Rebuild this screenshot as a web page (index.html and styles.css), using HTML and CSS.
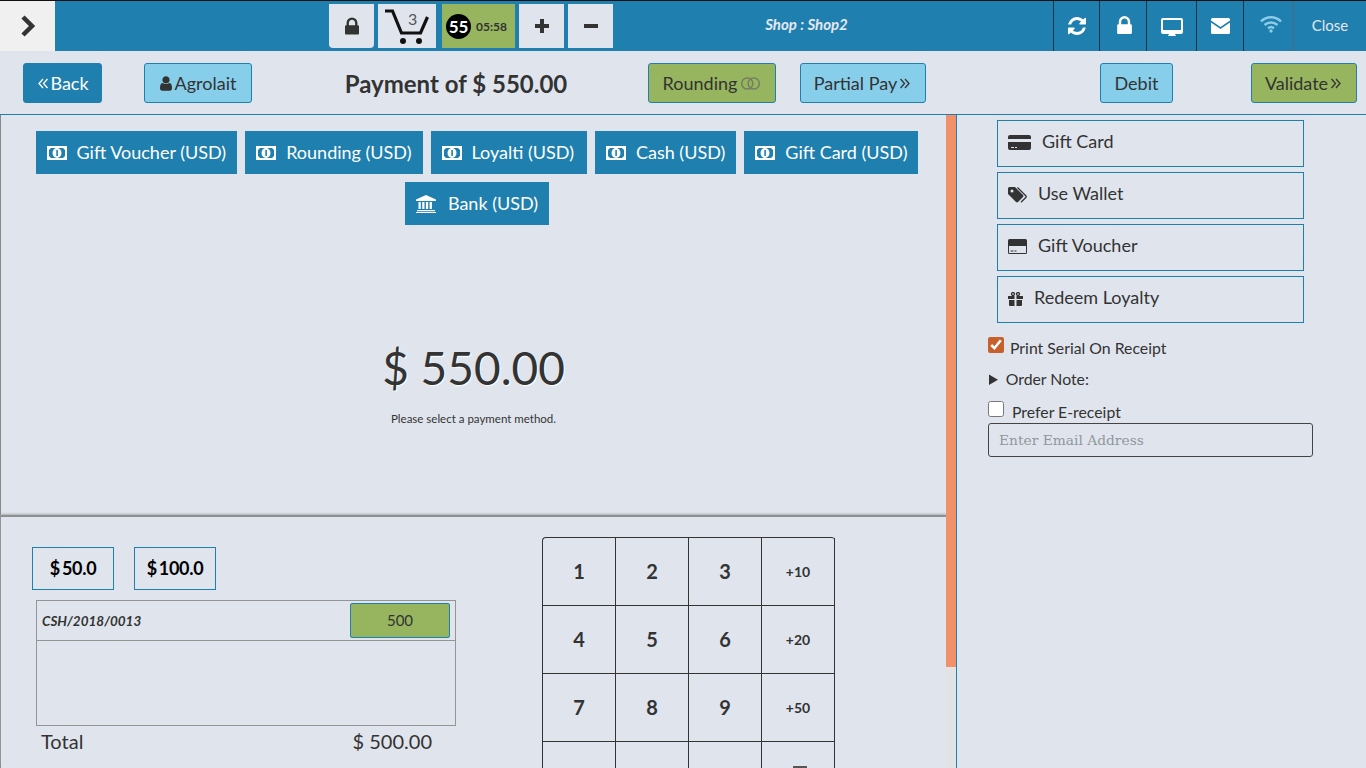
FILE: index.html
```html
<!DOCTYPE html>
<html>

<head>
    <title>Payment</title>
    <link rel="stylesheet" href="styles.css">
</head>

<body>
    <div class="topbar">
        <div class="toggle">
            <svg width="16" height="22" viewBox="0 0 16 22"><polyline points="3,2 12,11 3,20" fill="none" stroke="#333" stroke-width="4.5"/></svg>
        </div>
        <div class="tools">
            <div class="tool tool-lock">
                <svg width="14" height="18" viewBox="0 128 1152 1408"><path fill="#333" d="M320 768h512v-192q0-106-75-181t-181-75-181 75-75 181v192zm832 96v576q0 40-28 68t-68 28h-960q-40 0-68-28t-28-68v-576q0-40 28-68t68-28h32v-192q0-184 132-316t316-132 316 132 132 316v192h32q40 0 68 28t28 68z"/></svg>
            </div>
            <div class="tool tool-cart">
                <svg width="46" height="38" viewBox="0 0 46 38">
                    <path d="M1 4h7.500l9 22h19l7-16" fill="none" stroke="#111" stroke-width="3.200"/>
                    <circle cx="19" cy="34" r="3" fill="#111"/>
                    <circle cx="35" cy="34" r="3" fill="#111"/>
                </svg>
                <span class="cart-count">3</span>
            </div>
            <div class="timer">
                <span class="timer-num">55</span>
                <span class="timer-time">05:58</span>
            </div>
            <div class="tool tool-sign">
                <svg width="16" height="16" viewBox="0 0 16 16"><path fill="#333" d="M6 1h4v5h5v4h-5v5H6v-5H1V6h5z"/></svg>
            </div>
            <div class="tool tool-sign">
                <svg width="16" height="16" viewBox="0 0 16 16"><rect x="1" y="6" width="14" height="4" fill="#333"/></svg>
            </div>
        </div>
        <div class="shop">Shop : Shop2</div>
        <div class="status">
            <div class="status-cell cell-sync">
                <svg width="18" height="18" viewBox="0 0 1536 1536"><path fill="#fff" d="M1511 928q0 5-1 7-64 268-268 434.500t-478 166.500q-146 0-282.500-55t-243.500-157l-129 129q-19 19-45 19t-45-19-19-45v-448q0-26 19-45t45-19h448q26 0 45 19t19 45-19 45l-137 137q71 66 161 102t187 36q134 0 250-65t186-179q11-17 53-117 8-23 30-23h192q13 0 22.500 9.500t9.500 22.500zm25-800v448q0 26-19 45t-45 19h-448q-26 0-45-19t-19-45 19-45l138-138q-148-137-349-137-134 0-250 65t-186 179q-11 17-53 117-8 23-30 23h-199q-13 0-22.500-9.500t-9.500-22.500v-7q65-268 270-434.500t480-166.500q146 0 284 55.500t245 156.500l130-129q19-19 45-19t45 19 19 45z"/></svg>
            </div>
            <div class="status-cell cell-lock">
                <svg width="15" height="18" viewBox="0 128 1152 1408"><path fill="#fff" d="M320 768h512v-192q0-106-75-181t-181-75-181 75-75 181v192zm832 96v576q0 40-28 68t-68 28h-960q-40 0-68-28t-28-68v-576q0-40 28-68t68-28h32v-192q0-184 132-316t316-132 316 132 132 316v192h32q40 0 68 28t28 68z"/></svg>
            </div>
            <div class="status-cell cell-screen">
                <svg width="22" height="20" viewBox="0 0 22 20"><path fill="#fff" fill-rule="evenodd" d="M2 1h18a2 2 0 0 1 2 2v12a2 2 0 0 1-2 2h-6l1 2H7l1-2H2a2 2 0 0 1-2-2V3a2 2 0 0 1 2-2zm0 2v10h18V3z"/></svg>
            </div>
            <div class="status-cell cell-mail">
                <svg width="19" height="16" viewBox="0 0 19 16"><path fill="#fff" d="M1.500 0h16A1.500 1.500 0 0 1 19 1.500v1L9.500 9 0 2.500v-1A1.500 1.500 0 0 1 1.500 0zM0 4.500l9.500 6.500L19 4.500v10a1.500 1.500 0 0 1-1.500 1.500h-16A1.500 1.500 0 0 1 0 14.500z"/></svg>
            </div>
            <div class="status-cell cell-wifi">
                <svg width="22" height="18" viewBox="0 0 22 18">
                    <g fill="none" stroke="#8acde9" stroke-width="2.400">
                        <path d="M1 6.500a14 14 0 0 1 20 0"/>
                        <path d="M4.500 10a9.500 9.500 0 0 1 13 0"/>
                        <path d="M8 13.300a4.500 4.500 0 0 1 6 0"/>
                    </g>
                    <circle cx="11" cy="16" r="1.700" fill="#8acde9"/>
                </svg>
            </div>
            <div class="status-cell cell-close">Close</div>
        </div>
    </div>

    <div class="header">
        <button class="btn btn-dark btn-back">
            <svg class="dbl" width="10" height="11" viewBox="0 0 10 11"><path d="M5 1 1 5.500 5 10M9.500 1l-4 4.500 4 4.500" fill="none" stroke="currentColor" stroke-width="1.300"/></svg>Back
        </button>
        <button class="btn btn-light btn-customer">
            <svg class="usr" width="12" height="15" viewBox="256 128 1280 1536"><path fill="#333" d="M1536 1399q0 109-62.500 187t-150.500 78h-854q-88 0-150.500-78t-62.500-187q0-85 8.500-160.500t31.500-152 58.500-131 94-89 134.500-34.500q131 128 313 128t313-128q76 0 134.500 34.500t94 89 58.500 131 31.500 152 8.500 160.500zm-256-887q0 159-112.500 271.500t-271.500 112.500-271.500-112.500-112.500-271.500 112.500-271.500 271.500-112.500 271.500 112.500 112.500 271.500z"/></svg>Agrolait
        </button>
        <h1 class="title">Payment of $ 550.00</h1>
        <button class="btn btn-green btn-rounding">
            Rounding<svg class="toggle-ico" width="21" height="13" viewBox="0 0 21 14"><g fill="none" stroke="#747f60" stroke-width="1.600"><circle cx="7" cy="7" r="6"/><circle cx="14" cy="7" r="6"/></g></svg>
        </button>
        <button class="btn btn-light btn-partial">
            Partial Pay<svg class="dbl" width="11" height="11" viewBox="0 0 10 11"><path d="M1 1l4 4.500L1 10M5.500 1l4 4.500-4 4.500" fill="none" stroke="currentColor" stroke-width="1.300"/></svg>
        </button>
        <button class="btn btn-light btn-debit">Debit</button>
        <button class="btn btn-green btn-validate">
            Validate<svg class="dbl" width="11" height="11" viewBox="0 0 10 11"><path d="M1 1l4 4.500L1 10M5.500 1l4 4.500-4 4.500" fill="none" stroke="currentColor" stroke-width="1.300"/></svg>
        </button>
    </div>

    <div class="main">
        <div class="pay">
            <div class="pay-top">
                <div class="methods">
                    <div class="method"><svg class="ico-money" width="20" height="14" viewBox="0 0 20 14"><path fill="#fff" fill-rule="evenodd" d="M0 0h20v14H0zM4 2 2 4v6l2 2h12l2-2V4l-2-2z"/><ellipse cx="10" cy="7" rx="4.500" ry="5" fill="#fff"/><rect x="9.300" y="4" width="1.600" height="6" fill="#1f7fae"/></svg>Gift Voucher (USD)</div>
                    <div class="method"><svg class="ico-money" width="20" height="14" viewBox="0 0 20 14"><path fill="#fff" fill-rule="evenodd" d="M0 0h20v14H0zM4 2 2 4v6l2 2h12l2-2V4l-2-2z"/><ellipse cx="10" cy="7" rx="4.500" ry="5" fill="#fff"/><rect x="9.300" y="4" width="1.600" height="6" fill="#1f7fae"/></svg>Rounding (USD)</div>
                    <div class="method method-wide"><svg class="ico-money" width="20" height="14" viewBox="0 0 20 14"><path fill="#fff" fill-rule="evenodd" d="M0 0h20v14H0zM4 2 2 4v6l2 2h12l2-2V4l-2-2z"/><ellipse cx="10" cy="7" rx="4.500" ry="5" fill="#fff"/><rect x="9.300" y="4" width="1.600" height="6" fill="#1f7fae"/></svg>Loyalti (USD)</div>
                    <div class="method"><svg class="ico-money" width="20" height="14" viewBox="0 0 20 14"><path fill="#fff" fill-rule="evenodd" d="M0 0h20v14H0zM4 2 2 4v6l2 2h12l2-2V4l-2-2z"/><ellipse cx="10" cy="7" rx="4.500" ry="5" fill="#fff"/><rect x="9.300" y="4" width="1.600" height="6" fill="#1f7fae"/></svg>Cash (USD)</div>
                    <div class="method"><svg class="ico-money" width="20" height="14" viewBox="0 0 20 14"><path fill="#fff" fill-rule="evenodd" d="M0 0h20v14H0zM4 2 2 4v6l2 2h12l2-2V4l-2-2z"/><ellipse cx="10" cy="7" rx="4.500" ry="5" fill="#fff"/><rect x="9.300" y="4" width="1.600" height="6" fill="#1f7fae"/></svg>Gift Card (USD)</div>
                    <div class="method"><svg class="ico-bank" width="20" height="18" viewBox="0 0 20 18"><path fill="#fff" d="M10 0l10 4.500V6H0V4.500zM1 15h18v1.200H1zM0 17h20v1H0zM2.500 7h2.300v7H2.500zM6.200 7h2.300v7H6.200zM9.900 7h2.300v7H9.900zM13.600 7h2.300v7h-2.300z"/></svg>Bank (USD)</div>
                </div>
                <div class="due">$ 550.00</div>
                <div class="hint">Please select a payment method.</div>
            </div>
            <div class="pay-bottom">
                <div class="cash">
                    <div class="quick">
                        <div class="quick-btn">$ 50.0</div>
                        <div class="quick-btn">$ 100.0</div>
                    </div>
                    <div class="lines">
                        <div class="line">
                            <span class="line-ref">CSH/2018/0013</span>
                            <span class="line-amt">500</span>
                        </div>
                    </div>
                    <div class="total">
                        <span>Total</span>
                        <span>$ 500.00</span>
                    </div>
                </div>
                <div class="numpad">
                    <div class="key">1</div>
                    <div class="key">2</div>
                    <div class="key">3</div>
                    <div class="key key-add">+10</div>
                    <div class="key">4</div>
                    <div class="key">5</div>
                    <div class="key">6</div>
                    <div class="key key-add">+20</div>
                    <div class="key">7</div>
                    <div class="key">8</div>
                    <div class="key">9</div>
                    <div class="key key-add">+50</div>
                    <div class="key"></div>
                    <div class="key"></div>
                    <div class="key"></div>
                    <div class="key key-del"><span class="del-bar"></span></div>
                </div>
            </div>
            <div class="scroll"></div>
        </div>

        <div class="side">
            <div class="option">
                <svg class="ico-card" width="23" height="15" viewBox="0 0 23 15"><path fill="#333" d="M2 0h19a2 2 0 0 1 2 2v2H0V2a2 2 0 0 1 2-2zM0 7h23v6a2 2 0 0 1-2 2H2a2 2 0 0 1-2-2zm3 5v1h3v-1zm4 0v1h2v-1z"/></svg>Gift Card
            </div>
            <div class="option">
                <svg class="ico-tags" width="20" height="16" viewBox="0 0 20 16"><path fill="#333" d="M1.500 0h5.500l8 8a1.500 1.500 0 0 1 0 2l-5 5a1.500 1.500 0 0 1-2 0l-8-8V1.500A1.500 1.500 0 0 1 1.500 0zM4 2.500a1.500 1.500 0 1 0 0 3 1.500 1.500 0 0 0 0-3z" fill-rule="evenodd"/><path fill="none" stroke="#333" stroke-width="1.300" d="M9.500 0.500l8.500 8.500a1 1 0 0 1 0 1.300l-5 5"/></svg>Use Wallet
            </div>
            <div class="option">
                <svg class="ico-voucher" width="19" height="15" viewBox="0 0 19 15"><path fill="#333" fill-rule="evenodd" d="M1.500 0h16A1.500 1.500 0 0 1 19 1.500v12a1.500 1.500 0 0 1-1.500 1.500h-16A1.500 1.500 0 0 1 0 13.500v-12A1.500 1.500 0 0 1 1.500 0zM1 7v6.500a.5.500 0 0 0 .5.500h16a.5.500 0 0 0 .5-.5V7zm1.500 4.500h3v1h-3zm4 0h2v1h-2z"/></svg>Gift Voucher
            </div>
            <div class="option">
                <svg class="ico-gift" width="15" height="14" viewBox="0 0 15 14"><path fill="#333" d="M0 4h6.500v3H0zM8.500 4H15v3H8.500zM1 8h5.500v6H2a1 1 0 0 1-1-1zM8.500 8H14v5a1 1 0 0 1-1 1H8.500z"/><g fill="none" stroke="#333" stroke-width="1.300"><circle cx="5" cy="2" r="1.500"/><circle cx="10" cy="2" r="1.500"/></g></svg>Redeem Loyalty
            </div>
            <label class="check check-serial"><input type="checkbox" checked>Print Serial On Receipt</label>
            <details class="note">
                <summary>Order Note:</summary>
            </details>
            <label class="check check-mail"><input type="checkbox">Prefer E-receipt</label>
            <input class="email" type="text" placeholder="Enter Email Address">
        </div>
    </div>
</body>

</html>
```
FILE: styles.css
```css
* {
    box-sizing: border-box;
}

html,
body {
    margin: 0;
    height: 768px;
    overflow: hidden;
}

body {
    background: #e0e5ed;
    color: #333;
    font-family: Lato, "Liberation Sans", sans-serif;
    font-size: 14px;
}

/* top bar */
.topbar {
    display: flex;
    height: 51px;
    background: #1f7fae;
    border-top: 1px solid #111;
}

.toggle {
    display: flex;
    align-items: center;
    justify-content: center;
    width: 55px;
    background: #f0f0f0;
}

.tools {
    display: flex;
    gap: 4px;
    margin-left: 274px;
    padding-top: 3px;
    height: 47px;
}

.tool {
    display: flex;
    align-items: center;
    justify-content: center;
    position: relative;
    background: #e0e5ed;
}

.tool-lock {
    width: 45px;
    border-radius: 0 0 4px 4px;
}

.tool-cart {
    width: 58px;
}

.cart-count {
    position: absolute;
    top: 5px;
    left: 30px;
    font-size: 16px;
    color: #555;
}

.tool-sign {
    width: 45px;
}

.timer {
    display: flex;
    align-items: center;
    width: 73px;
    margin-left: 2px;
    padding-left: 4px;
    background: #97b55f;
}

.timer-num {
    width: 25px;
    height: 25px;
    line-height: 25px;
    border-radius: 50%;
    background: #000;
    color: #fff;
    font-size: 17px;
    font-weight: 700;
    text-align: center;
}

.timer-time {
    margin-left: 5px;
    font-size: 12px;
    font-weight: 700;
}

.shop {
    width: 390px;
    padding: 15px 3px 0 0;
    color: #e4e7ec;
    font-size: 15px;
    font-weight: 700;
    font-style: italic;
    text-align: center;
    line-height: 17px;
    flex: none;
}

.status {
    display: flex;
    margin-left: 50px;
}

.status-cell {
    display: flex;
    align-items: center;
    justify-content: center;
    border-left: 1px solid #14344a;
}

.cell-sync {
    width: 46px;
}

.cell-lock {
    width: 47px;
    padding: 0 0 3px 3px;
}

.cell-screen {
    width: 50px;
    padding-top: 2px;
}

.cell-mail {
    width: 47px;
}

.cell-wifi {
    width: 50px;
    padding: 0 0 4px 4px;
}

.cell-close {
    width: 73px;
    padding-bottom: 2px;
    border-left-color: #4a6a80;
    color: #e4e7ec;
    font-size: 15px;
}

/* payment header */
.header {
    display: flex;
    align-items: center;
    height: 64px;
    padding: 1px 0 0 23px;
    border-bottom: 1px solid #1f7fae;
}

.btn {
    display: flex;
    align-items: center;
    justify-content: center;
    height: 40px;
    padding: 0;
    border: 1px solid #1f7fae;
    border-radius: 3px;
    color: #333;
    font-family: Lato, "Liberation Sans", sans-serif;
    font-size: 18px;
}

.btn-dark {
    background: #1f7fae;
    color: #fff;
}

.btn-light {
    background: #87ceeb;
}

.btn-green {
    background: #97b55f;
}

.dbl {
    margin: 0 2px;
}

.usr {
    margin-right: 3px;
}

.toggle-ico {
    margin-left: 3px;
}

.btn-back {
    width: 79px;
}

.btn-customer {
    width: 108px;
    margin-left: 42px;
}

.title {
    width: 396px;
    margin: 0;
    padding-left: 12px;
    font-size: 24px;
    font-weight: 700;
    text-align: center;
}

.btn-rounding {
    width: 128px;
}

.btn-partial {
    width: 126px;
    margin-left: 24px;
}

.btn-debit {
    width: 73px;
    margin-left: 174px;
}

.btn-validate {
    width: 106px;
    margin-left: 78px;
}

/* main area */
.main {
    display: flex;
    height: 653px;
}

.pay {
    position: relative;
    width: 957px;
    border-left: 1px solid #888;
    border-right: 1px solid #1f7fae;
}

.pay-top {
    height: 400px;
    width: 945px;
    padding-top: 16px;
    text-align: center;
}

.methods {
    display: flex;
    flex-wrap: wrap;
    justify-content: center;
    gap: 8px;
    width: 952px;
}

.method {
    display: flex;
    align-items: center;
    height: 43px;
    padding: 0 11px 2px;
    background: #1f7fae;
    color: #fff;
    font-size: 18px;
}

.method-wide {
    padding-right: 13px;
}

.ico-money {
    margin: 2px 10px 0 0;
}

.ico-bank {
    margin: 2px 12px 0 0;
}

.due {
    margin-top: 114px;
    font-size: 46px;
    line-height: 58px;
    text-shadow: 1px 1px 1px #fff;
}

.hint {
    margin-top: 15px;
    font-size: 11.500px;
    line-height: 14px;
}

.pay-bottom {
    display: flex;
    width: 945px;
    height: 253px;
    overflow: hidden;
    border-top: 2px solid #8c8f94;
    box-shadow: 0 -1px 2px #aaa;
}

.cash {
    width: 541px;
    padding-left: 31px;
}

.quick {
    display: flex;
    gap: 20px;
    padding-top: 30px;
}

.quick-btn {
    width: 82px;
    height: 43px;
    line-height: 41px;
    border: 1px solid #1f7fae;
    color: #000;
    font-size: 18px;
    font-weight: 700;
    text-align: center;
    word-spacing: -2px;
    letter-spacing: -0.300px;
}

.lines {
    width: 420px;
    height: 126px;
    margin: 10px 0 0 4px;
    border: 1px solid #949494;
}

.line {
    display: flex;
    align-items: center;
    justify-content: space-between;
    height: 40px;
    padding: 0 5px;
    border-bottom: 1px solid #949494;
}

.line-ref {
    font-size: 13.500px;
    font-weight: 700;
    font-style: italic;
}

.line-amt {
    width: 100px;
    height: 35px;
    line-height: 33px;
    border: 1px solid #1f7fae;
    border-radius: 2px;
    background: #97b55f;
    font-size: 15px;
    text-align: center;
}

.total {
    display: flex;
    justify-content: space-between;
    width: 391px;
    margin: 3px 0 0 9px;
    font-size: 20px;
    line-height: 24px;
}

.numpad {
    display: grid;
    grid-template-columns: repeat(4, 73px);
    grid-auto-rows: 68px;
    width: 293px;
    margin-top: 20px;
    border-top: 1px solid #333;
    border-left: 1px solid #333;
    border-radius: 4px 4px 0 0;
    align-self: flex-start;
}

.key {
    display: flex;
    align-items: center;
    justify-content: center;
    position: relative;
    padding-bottom: 2px;
    border-right: 1px solid #333;
    border-bottom: 1px solid #333;
    font-size: 20px;
    font-weight: 700;
}

.key-add {
    padding-bottom: 0;
    font-size: 14px;
}

.del-bar {
    position: absolute;
    top: 24px;
    left: 31px;
    width: 14px;
    height: 2px;
    background: #555;
}

.scroll {
    position: absolute;
    top: 0;
    right: 0;
    bottom: 0;
    width: 10px;
    background: linear-gradient(#f2906a 552px, #e2e3e5 552px);
}

/* right column */
.side {
    width: 409px;
    padding: 5px 0 0 31px;
}

.option {
    display: flex;
    align-items: center;
    width: 307px;
    height: 47px;
    margin: 0 0 5px 9px;
    padding: 0 0 6px 10px;
    border: 1px solid #1f80ae;
    font-size: 18px;
}

.ico-card,
.ico-voucher,
.ico-gift {
    margin: 4px 11px 0 0;
}

.ico-tags {
    margin: 5px 10px 0 0;
}

.check {
    display: flex;
    align-items: center;
    font-size: 15.800px;
}

.check input {
    width: 16px;
    height: 16px;
    margin: 0;
    accent-color: #c8602c;
}

.check-serial {
    margin-top: 15px;
    line-height: 20px;
}

.check-serial input {
    margin: -6px 6px 0 0;
}

.note {
    margin-top: 11px;
    font-size: 15.800px;
    line-height: 20px;
}

.note summary {
    padding-left: 1px;
}

.check-mail {
    margin-top: 13px;
    line-height: 20px;
}

.check-mail input {
    margin: -6px 8px 0 0;
}

.email {
    display: block;
    width: 325px;
    height: 34px;
    margin-top: 1px;
    padding: 0 10px;
    border: 1px solid #444;
    border-radius: 3px;
    background: transparent;
    font-family: "DejaVu Serif", serif;
    font-size: 13.800px;
}

.email::placeholder {
    color: #8f979c;
}
```
